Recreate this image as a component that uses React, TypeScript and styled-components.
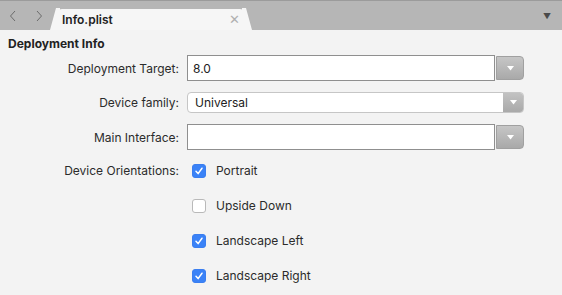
import * as React from "react";
import styled, { createGlobalStyle } from "styled-components";

const GlobalStyle = createGlobalStyle`
  html, body {
    margin: 0;
    padding: 0;
    background: #f3f3f3;
  }
  body {
    font-family: "Inter", "Liberation Sans", sans-serif;
    color: #262626;
  }
`;

const Page = styled.div`
  width: 562px;
  height: 295px;
  background: #f3f3f3;
  overflow: hidden;
`;

const TabBar = styled.div`
  height: 29px;
  border-top: 1px solid #9b9b9b;
  background: #b6b6b6;
  display: flex;
  align-items: flex-end;
  position: relative;
`;

const NavGroup = styled.div`
  display: flex;
  align-self: stretch;
`;

const NavButton = styled.div`
  width: 26px;
  display: flex;
  align-items: center;
  justify-content: center;
`;

const Tab = styled.div`
  margin-left: 4px;
  width: 190px;
  box-sizing: border-box;
  height: 21px;
  background: #f6f6f6;
  border-radius: 6px 6px 0 0;
  display: flex;
  align-items: center;
  justify-content: space-between;
  padding: 0 6px 1px 6px;
  position: relative;
  font-weight: 600;
  font-size: 12px;
  color: #222;

  &::before,
  &::after {
    content: "";
    position: absolute;
    bottom: 0;
    width: 10px;
    height: 22px;
    background: #f6f6f6;
  }
  &::before {
    left: -6px;
    clip-path: polygon(0 100%, 60% 0, 100% 0, 100% 100%);
  }
  &::after {
    right: -6px;
    clip-path: polygon(0 0, 40% 0, 100% 100%, 0 100%);
  }
`;

const TabClose = styled.span`
  color: #b0b0b0;
  font-weight: 300;
  font-size: 13px;
  line-height: 1;
`;

const TabMenu = styled.div`
  position: absolute;
  right: 11px;
  top: 10px;
  font-size: 8px;
  color: #4a4a4a;
`;

const Content = styled.div`
  padding: 6px 0 0 8px;
`;

const SectionTitle = styled.div`
  font-size: 12px;
  font-weight: 700;
  color: #222;
  height: 16px;
  line-height: 16px;
`;

const Row = styled.div<{ $mt: number }>`
  display: flex;
  align-items: center;
  margin-top: ${(p) => p.$mt}px;
`;

const Label = styled.div`
  width: 171px;
  flex: none;
  margin-right: 8px;
  font-size: 12px;
  text-align: right;
  color: #2b2b2b;
`;

const Field = styled.div`
  width: 337px;
  display: flex;
  align-items: center;
`;

const ComboField = styled.div`
  flex: 1;
  height: 26px;
  box-sizing: border-box;
  border: 1px solid #8f8f8f;
  background: #fff;
  display: flex;
  align-items: center;
  padding-left: 5px;
  font-size: 12px;
  color: #222;
`;

const ComboButton = styled.div`
  width: 28px;
  height: 24px;
  margin-left: 1px;
  box-sizing: border-box;
  border: 1px solid #a0a0a0;
  border-radius: 0 4px 4px 0;
  background: linear-gradient(#c6c6c6, #a9a9a9);
  display: flex;
  align-items: center;
  justify-content: center;
`;

const Popup = styled.div`
  flex: 1;
  height: 21px;
  box-sizing: border-box;
  border: 1px solid #c6c6c6;
  border-radius: 4px;
  background: #fff;
  display: flex;
  overflow: hidden;
`;

const PopupValue = styled.div`
  flex: 1;
  display: flex;
  align-items: center;
  padding-left: 7px;
  font-size: 12px;
  color: #222;
`;

const PopupArrow = styled.div`
  width: 20px;
  background: linear-gradient(#c2c2c2, #a9a9a9);
  display: flex;
  align-items: center;
  justify-content: center;
`;

const Arrow = () => (
  <svg width="7" height="5" viewBox="0 0 7 5">
    <path d="M0 0 H7 L3.5 4.5 Z" fill="#fff" />
  </svg>
);

const Checks = styled.div`
  display: flex;
  flex-direction: column;
`;

const CheckRow = styled.div`
  height: 35px;
  display: flex;
  align-items: center;
  padding-left: 5px;
  font-size: 12px;
  color: #2b2b2b;
`;

const Box = styled.div<{ $on: boolean }>`
  width: 14px;
  height: 14px;
  box-sizing: border-box;
  border-radius: 3px;
  margin-right: 10px;
  display: flex;
  align-items: center;
  justify-content: center;
  background: ${(p) => (p.$on ? "#3a82f7" : "#fff")};
  border: 1px solid ${(p) => (p.$on ? "#3a7ef0" : "#b9b9b9")};
`;

const Check = () => (
  <svg width="10" height="10" viewBox="0 0 10 10">
    <path
      d="M2 5.3 L4.1 7.6 L8 2.2"
      fill="none"
      stroke="#fff"
      strokeWidth="1.5"
      strokeLinecap="round"
      strokeLinejoin="round"
    />
  </svg>
);

const TopRow = styled(Row)`
  align-items: flex-start;
`;

const TopLabel = styled(Label)`
  line-height: 35px;
`;

const orientations = [
  { name: "Portrait", on: true },
  { name: "Upside Down", on: false },
  { name: "Landscape Left", on: true },
  { name: "Landscape Right", on: true }
];

const App = () => {
  return (
    <Page>
      <GlobalStyle />
      <TabBar>
        <NavGroup>
          <NavButton>
            <svg width="8" height="12" viewBox="0 0 8 12">
              <path d="M6 1 L1.5 6 L6 11" fill="none" stroke="#6b6b6b" strokeWidth="1" />
            </svg>
          </NavButton>
          <NavButton>
            <svg width="8" height="12" viewBox="0 0 8 12">
              <path d="M2 1 L6.5 6 L2 11" fill="none" stroke="#6b6b6b" strokeWidth="1" />
            </svg>
          </NavButton>
        </NavGroup>
        <Tab>
          <span>Info.plist</span>
          <TabClose>✕</TabClose>
        </Tab>
        <TabMenu>▼</TabMenu>
      </TabBar>
      <Content>
        <SectionTitle>Deployment Info</SectionTitle>
        <Row $mt={3}>
          <Label>Deployment Target:</Label>
          <Field>
            <ComboField>8.0</ComboField>
            <ComboButton>
              <Arrow />
            </ComboButton>
          </Field>
        </Row>
        <Row $mt={11}>
          <Label>Device family:</Label>
          <Field>
            <Popup>
              <PopupValue>Universal</PopupValue>
              <PopupArrow>
                <Arrow />
              </PopupArrow>
            </Popup>
          </Field>
        </Row>
        <Row $mt={11}>
          <Label>Main Interface:</Label>
          <Field>
            <ComboField />
            <ComboButton>
              <Arrow />
            </ComboButton>
          </Field>
        </Row>
        <TopRow $mt={3}>
          <TopLabel>Device Orientations:</TopLabel>
          <Checks>
            {orientations.map((o) => (
              <CheckRow key={o.name}>
                <Box $on={o.on}>{o.on && <Check />}</Box>
                {o.name}
              </CheckRow>
            ))}
          </Checks>
        </TopRow>
      </Content>
    </Page>
  );
};

export default App;
